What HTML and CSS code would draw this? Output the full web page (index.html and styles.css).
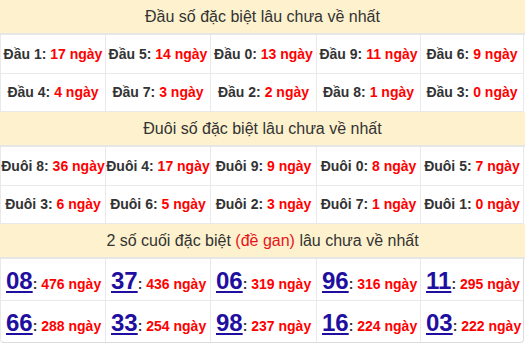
FILE: index.html
```html
<!DOCTYPE html>
<html lang="vi">
<head>
<meta charset="utf-8">
<title>Thống kê lâu chưa về</title>
<link rel="stylesheet" href="styles.css">
</head>
<body>
<div class="wrap">
  <div class="sec-head">Đầu số đặc biệt lâu chưa về nhất</div>
  <div class="grid">
    <div class="cell"><span class="txt"><b>Đầu 1: </b><span class="red">17 ngày</span></span></div>
    <div class="cell"><span class="txt"><b>Đầu 5: </b><span class="red">14 ngày</span></span></div>
    <div class="cell"><span class="txt"><b>Đầu 0: </b><span class="red">13 ngày</span></span></div>
    <div class="cell"><span class="txt"><b>Đầu 9: </b><span class="red">11 ngày</span></span></div>
    <div class="cell"><span class="txt"><b>Đầu 6: </b><span class="red">9 ngày</span></span></div>
    <div class="cell"><span class="txt"><b>Đầu 4: </b><span class="red">4 ngày</span></span></div>
    <div class="cell"><span class="txt"><b>Đầu 7: </b><span class="red">3 ngày</span></span></div>
    <div class="cell"><span class="txt"><b>Đầu 2: </b><span class="red">2 ngày</span></span></div>
    <div class="cell"><span class="txt"><b>Đầu 8: </b><span class="red">1 ngày</span></span></div>
    <div class="cell"><span class="txt"><b>Đầu 3: </b><span class="red">0 ngày</span></span></div>
  </div>
  <div class="sec-head">Đuôi số đặc biệt lâu chưa về nhất</div>
  <div class="grid">
    <div class="cell"><span class="txt"><b>Đuôi 8: </b><span class="red">36 ngày</span></span></div>
    <div class="cell"><span class="txt"><b>Đuôi 4: </b><span class="red">17 ngày</span></span></div>
    <div class="cell"><span class="txt"><b>Đuôi 9: </b><span class="red">9 ngày</span></span></div>
    <div class="cell"><span class="txt"><b>Đuôi 0: </b><span class="red">8 ngày</span></span></div>
    <div class="cell"><span class="txt"><b>Đuôi 5: </b><span class="red">7 ngày</span></span></div>
    <div class="cell"><span class="txt"><b>Đuôi 3: </b><span class="red">6 ngày</span></span></div>
    <div class="cell"><span class="txt"><b>Đuôi 6: </b><span class="red">5 ngày</span></span></div>
    <div class="cell"><span class="txt"><b>Đuôi 2: </b><span class="red">3 ngày</span></span></div>
    <div class="cell"><span class="txt"><b>Đuôi 7: </b><span class="red">1 ngày</span></span></div>
    <div class="cell"><span class="txt"><b>Đuôi 1: </b><span class="red">0 ngày</span></span></div>
  </div>
  <div class="sec-head">2 số cuối đặc biệt <span class="gan">(đề gan)</span> lâu chưa về nhất</div>
  <div class="grid grid-last">
    <div class="cell big"><span class="txt"><a class="num" href="#">08</a><b>: </b><span class="red">476 ngày</span></span></div>
    <div class="cell big"><span class="txt"><a class="num" href="#">37</a><b>: </b><span class="red">436 ngày</span></span></div>
    <div class="cell big"><span class="txt"><a class="num" href="#">06</a><b>: </b><span class="red">319 ngày</span></span></div>
    <div class="cell big"><span class="txt"><a class="num" href="#">96</a><b>: </b><span class="red">316 ngày</span></span></div>
    <div class="cell big"><span class="txt"><a class="num" href="#">11</a><b>: </b><span class="red">295 ngày</span></span></div>
    <div class="cell big"><span class="txt"><a class="num" href="#">66</a><b>: </b><span class="red">288 ngày</span></span></div>
    <div class="cell big"><span class="txt"><a class="num" href="#">33</a><b>: </b><span class="red">254 ngày</span></span></div>
    <div class="cell big"><span class="txt"><a class="num" href="#">98</a><b>: </b><span class="red">237 ngày</span></span></div>
    <div class="cell big"><span class="txt"><a class="num" href="#">16</a><b>: </b><span class="red">224 ngày</span></span></div>
    <div class="cell big"><span class="txt"><a class="num" href="#">03</a><b>: </b><span class="red">222 ngày</span></span></div>
  </div>
</div>
</body>
</html>
```
FILE: styles.css
```css
html, body {
  margin: 0;
  padding: 0;
  background: #fff;
}
body {
  font-family: "Liberation Sans", Arial, sans-serif;
  color: #333;
}
.wrap {
  width: 525px;
}
.sec-head {
  height: 33px;
  line-height: 33px;
  background: #fdf2cd;
  border-bottom: 2px solid #e6e6e6;
  text-align: center;
  font-size: 16px;
  color: #333;
  white-space: nowrap;
}
.gan {
  color: #e8121b;
}
.grid {
  width: 523px;
  display: grid;
  grid-template-columns: 105px 105px 106px 104px 103px;
  border-left: 1px solid #e9e9e9;
  box-sizing: border-box;
}
.cell {
  height: 38.5px;
  box-sizing: border-box;
  border-right: 1px solid #e9e9e9;
  border-bottom: 1px solid #e9e9e9;
  display: flex;
  align-items: center;
  justify-content: center;
  font-size: 14px;
  white-space: nowrap;
  overflow: hidden;
}
.txt {
  white-space: pre;
}
.cell b {
  font-weight: bold;
  color: #333;
}
.red {
  color: #ff0000;
  font-weight: bold;
}
.grid-last {
  border-bottom-left-radius: 4px;
  border-bottom-right-radius: 4px;
  border-bottom: 1px solid #dcdcdc;
  overflow: hidden;
  width: 524px;
  border-right: 1px solid #dcdcdc;
}
.grid-last .cell {
  height: 41.5px;
  justify-content: flex-start;
  padding-left: 5px;
  padding-top: 3px;
}
.grid-last .cell:nth-child(n+6) {
  border-bottom: none;
}
.grid-last .cell:nth-child(5n) {
  border-right: none;
}
.num {
  font-size: 24px;
  font-weight: bold;
  color: #1f0fa0;
  text-decoration: underline;
}
```
